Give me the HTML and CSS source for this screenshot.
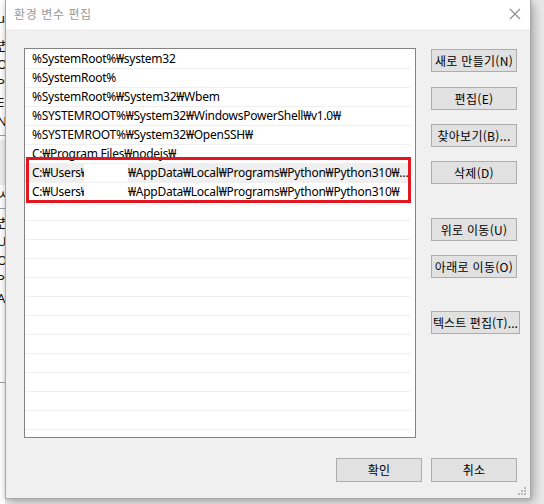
FILE: index.html
```html
<!DOCTYPE html>
<html lang="ko">
<head>
<meta charset="utf-8">
<title>환경 변수 편집</title>
<link rel="stylesheet" href="styles.css">
</head>
<body>
<div class="desktop">
  <div class="bgwin">
    <div class="bg-line">u</div>
    <div class="bg-gap"></div>
    <div class="bg-line ul">변</div>
    <div class="bg-line">Or</div>
    <div class="bg-line">Pa</div>
    <div class="bg-line">E</div>
    <div class="bg-line">N</div>
    <div class="bg-sep"></div>
    <div class="bg-gray"></div>
    <div class="bg-line">ㅅ</div>
    <div class="bg-sep"></div>
    <div class="bg-line ul">변</div>
    <div class="bg-line">U</div>
    <div class="bg-line">Os</div>
    <div class="bg-line">Pa</div>
    <div class="bg-line">A</div>
    <div class="bg-gap2"></div>
    <div class="bg-sep"></div>
  </div>

  <div class="dialog">
    <div class="titlebar">
      <span class="title">환경 변수 편집</span>
      <svg class="close" width="12" height="12" viewBox="0 0 12 12"><path d="M1 1L11 11M11 1L1 11" stroke="#8c8c8c" stroke-width="1.1" fill="none"/></svg>
    </div>
    <div class="body">
      <div class="main">
        <div class="listwrap">
          <div class="list">
            <div class="row">%SystemRoot%₩system32</div>
            <div class="row">%SystemRoot%</div>
            <div class="row">%SystemRoot%₩System32₩Wbem</div>
            <div class="row">%SYSTEMROOT%₩System32₩WindowsPowerShell₩v1.0₩</div>
            <div class="row">%SYSTEMROOT%₩System32₩OpenSSH₩</div>
            <div class="row">C:₩Program Files₩nodejs₩</div>
            <div class="row hover"><span class="seg">C:₩Users₩</span><span class="redact"></span>₩AppData₩Local₩Programs₩Python₩Python310₩Scripts₩</div>
            <div class="row"><span class="seg">C:₩Users₩</span><span class="redact"></span>₩AppData₩Local₩Programs₩Python₩Python310₩</div>
            <div class="row"></div><div class="row"></div><div class="row"></div><div class="row"></div>
            <div class="row"></div><div class="row"></div><div class="row"></div><div class="row"></div>
            <div class="row"></div><div class="row"></div><div class="row"></div><div class="row"></div>
            <div class="row"></div>
          </div>
          <div class="mark"></div>
        </div>
        <div class="buttons">
          <button class="btn">새로 만들기(N)</button>
          <button class="btn g15">편집(E)</button>
          <button class="btn g14">찾아보기(B)...</button>
          <button class="btn g14">삭제(D)</button>
          <button class="btn g34">위로 이동(U)</button>
          <button class="btn g14">아래로 이동(O)</button>
          <button class="btn wide g33">텍스트 편집(T)...</button>
        </div>
      </div>
      <div class="footer">
        <button class="btn">확인</button>
        <button class="btn">취소</button>
      </div>
    </div>
    <svg class="grip" width="9" height="9" viewBox="0 0 9 9">
      <rect x="6" y="0" width="2" height="2" fill="#b8b8b8"/>
      <rect x="3" y="3" width="2" height="2" fill="#b8b8b8"/>
      <rect x="6" y="3" width="2" height="2" fill="#b8b8b8"/>
      <rect x="0" y="6" width="2" height="2" fill="#b8b8b8"/>
      <rect x="3" y="6" width="2" height="2" fill="#b8b8b8"/>
      <rect x="6" y="6" width="2" height="2" fill="#b8b8b8"/>
    </svg>
  </div>
</div>
</body>
</html>
```

FILE: styles.css
```css
* { box-sizing: border-box; }
html, body { margin: 0; padding: 0; }
body {
  width: 544px;
  height: 504px;
  overflow: hidden;
  background: #ffffff;
  font-family: "Noto Sans", "Noto Sans CJK KR", sans-serif;
  font-size: 12px;
  color: #000;
}
.desktop {
  position: relative;
  width: 544px;
  height: 504px;
  overflow: hidden;
  background: #e9e9e9;
}
.bgwin {
  position: absolute;
  left: 0;
  top: 0;
  width: 5px;
  height: 504px;
  background: #ffffff;
  overflow: hidden;
  display: flex;
  flex-direction: column;
  padding-top: 9px;
}
.bg-line {
  height: 19px;
  line-height: 19px;
  font-size: 13px;
  white-space: nowrap;
  margin-left: -3px;
  color: #111;
}
.bg-line.ul { text-decoration: underline; }
.bg-gap { height: 8px; }
.bg-gap2 { height: 70px; }
.bg-sep { height: 1px; width: 5px; background: #a0a0a0; margin: 4px 0; flex: none; }
.bg-gray { height: 45px; width: 5px; background: #f0f0f0; flex: none; }

.dialog {
  position: absolute;
  left: 5px;
  top: 0;
  width: 526px;
  height: 499px;
  background: #f0f0f0;
  border: 1px solid #a8a8a8;
  border-top: none;
  box-shadow: 3px 3px 10px rgba(0,0,0,0.28), 0 0 4px rgba(0,0,0,0.12);
  display: flex;
  flex-direction: column;
}
.titlebar {
  height: 29px;
  background: #ffffff;
  display: flex;
  align-items: center;
  justify-content: space-between;
  padding: 0 9px 2px 8px;
}
.title {
  color: #9a9a9a;
  font-size: 12px;
  font-family: "Noto Sans CJK KR", sans-serif;
  letter-spacing: 0.6px;
}
.close { display: block; margin-top: 1px; }

.body {
  flex: 1;
  padding: 19px 0 0 18px;
  display: flex;
  flex-direction: column;
}
.main {
  display: flex;
  gap: 15px;
}
.listwrap {
  position: relative;
  width: 392px;
  height: 390px;
}
.list {
  width: 392px;
  height: 390px;
  background: #ffffff;
  border: 1px solid #838383;
  padding-top: 1px;
  overflow: hidden;
}
.row {
  height: 19px;
  line-height: 18px;
  border-bottom: 1px solid #f0f0f0;
  padding: 0 0 0 7px;
  white-space: nowrap;
  overflow: hidden;
  text-overflow: ellipsis;
  margin-right: 4px;
  letter-spacing: -0.25px;
}
.row.hover { background: #efefef; }
.seg {
  display: inline-block;
  width: 52px;
  overflow: hidden;
  vertical-align: top;
}
.redact {
  display: inline-block;
  width: 44px;
  height: 18px;
  background: #ffffff;
  vertical-align: top;
}
.mark {
  position: absolute;
  left: 2px;
  top: 109px;
  width: 385px;
  height: 46px;
  border: 3px solid #e3161f;
}

.buttons {
  display: flex;
  flex-direction: column;
  align-items: flex-start;
  padding-top: 1px;
}
.btn {
  width: 86px;
  height: 23px;
  border: 1px solid #adadad;
  background: #e1e1e1;
  font-family: "Noto Sans CJK KR", sans-serif;
  font-size: 12px;
  letter-spacing: 0.3px;
  color: #000;
  padding: 0;
  margin: 0;
  line-height: 20px;
  white-space: nowrap;
}
.btn.wide { width: 89px; letter-spacing: 0.1px; }
.g14 { margin-top: 14px; }
.g15 { margin-top: 15px; }
.g33 { margin-top: 33px; }
.g34 { margin-top: 34px; }

.footer {
  display: flex;
  justify-content: flex-end;
  gap: 9px;
  margin-top: 20px;
  padding-right: 13px;
}
.footer .btn { height: 24px; }
.grip {
  position: absolute;
  right: 3px;
  bottom: 2px;
}
```
